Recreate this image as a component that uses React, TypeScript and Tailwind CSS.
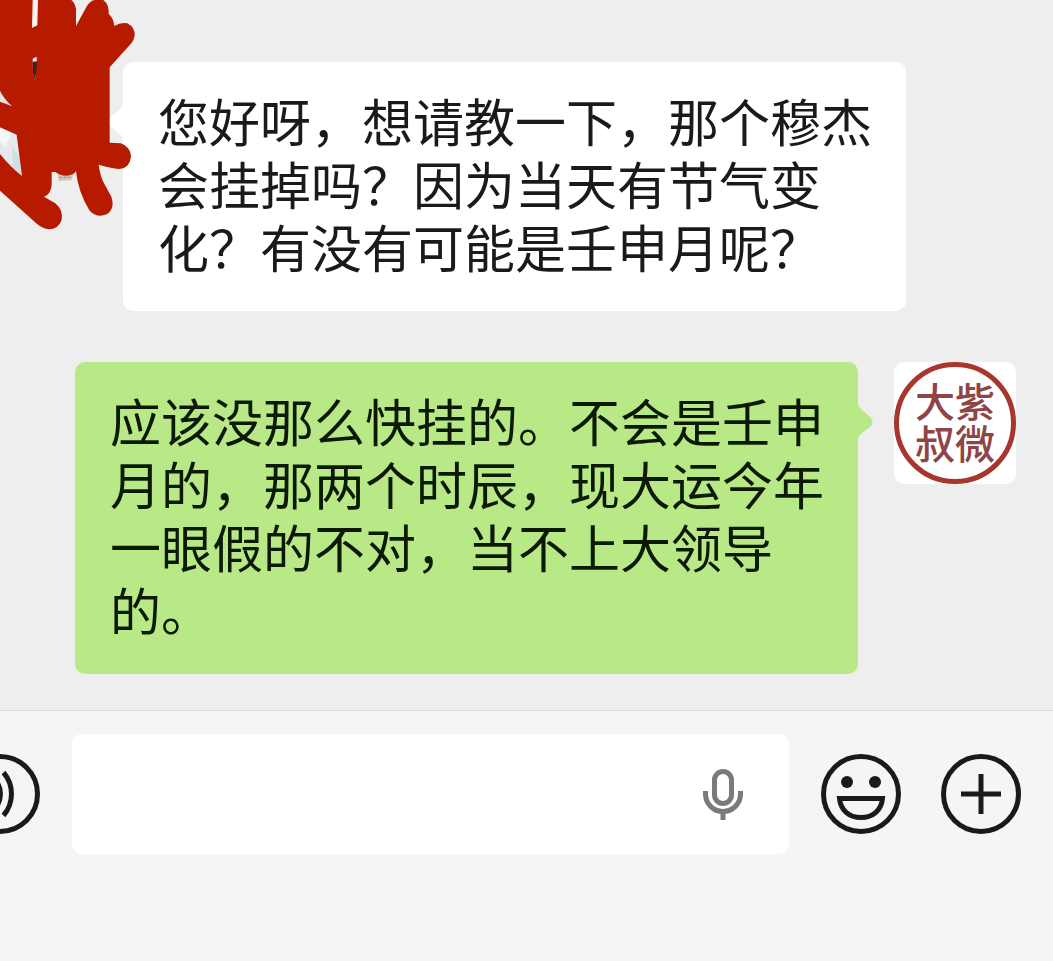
import type { ReactNode } from 'react'

interface Message {
  id: number
  mine: boolean
  text: string
}

const messages: Message[] = [
  {
    id: 1,
    mine: false,
    text: '您好呀，想请教一下，那个穆杰会挂掉吗？因为当天有节气变化？有没有可能是壬申月呢？',
  },
  {
    id: 2,
    mine: true,
    text: '应该没那么快挂的。不会是壬申月的，那两个时辰，现大运今年一眼假的不对，当不上大领导的。',
  },
]

// Contact photo, scribbled over with a red marker
function HiddenAvatar() {
  return (
    <svg
      className="absolute left-0 top-0 z-10 h-[240px] w-[180px] pointer-events-none"
      viewBox="0 0 540 720"
      aria-hidden="true"
    >
      <path d="M92 0H118V100L110 175H92Z" fill="#f6f3f1" />
      <path d="M98 185L113 184L111 214L103 240L98 212Z" fill="#3b2222" />
      <path d="M0 268L45 325L0 310Z" fill="#e4e3df" />
      <path d="M0 375L60 400L72 535L0 470Z" fill="#e3e9ed" />
      <path d="M0 384L34 398L18 440L0 425Z" fill="#f4f6f7" />
      <path d="M36 440L58 470L66 528L40 505Z" fill="#d3dde3" />
      <path d="M172 518H222L214 541L176 543Z" fill="#d3c7ba" />
      <path d="M178 532H214" stroke="#a99381" strokeWidth="4" strokeDasharray="8 5" />
      <path
        fill="#b61b00"
        fillRule="evenodd"
        d="M0 0H98L96 84L112 76L114 0H214Q226 10 228 28V78L262 16Q272 2 284 0H310Q328 14 326 42Q341 54 343 78Q362 66 382 70Q405 82 404 106Q402 122 394 130L329 202V428L362 430Q392 440 393 470Q389 504 358 507Q345 507 296 494Q301 530 312 550L334 590Q346 626 320 643Q290 656 268 631Q234 575 228 514Q218 527 200 527Q180 527 166 516L155 516V556Q152 584 132 590L166 610Q190 630 185 660Q175 688 146 688Q130 686 112 673L0 572V462Q32 502 66 528L50 404L0 382V305L37 319Q14 300 0 272ZM98 176L110 170V210L104 240L99 214Z"
      />
    </svg>
  )
}

function SealAvatar() {
  return (
    <div className="h-[122px] w-[122px] shrink-0 overflow-hidden rounded-[10px] bg-white">
      <div className="flex h-full w-full items-center justify-center rounded-full border-[5px] border-[#a8352e] pb-1 text-[40px] font-medium leading-[42px] text-[#8f4546]">
        <p className="w-20">大紫叔微</p>
      </div>
    </div>
  )
}

function Bubble({ mine, children }: { mine: boolean; children: ReactNode }) {
  return (
    <div
      className={
        mine
          ? 'relative flex-1 rounded-[10px] bg-[#b8e986] pb-[33px] pl-[35px] pr-8 pt-[27px] text-[#0c1a05]'
          : 'relative flex-1 rounded-[10px] bg-white pb-[33px] pl-[35px] pr-8 pt-[27px] text-[#1a1a1a]'
      }
    >
      <svg
        className={
          mine
            ? 'absolute left-full top-[42px] h-9 w-4 text-[#b8e986]'
            : 'absolute right-full top-[42px] h-9 w-4 -scale-x-100 text-white'
        }
        viewBox="0 0 16 36"
        fill="currentColor"
        aria-hidden="true"
      >
        <path d="M0 0Q1 4 4 6L12 13Q17 18 12 23L4 29Q1 31 0 35Z" />
      </svg>
      <p className="text-[51px] leading-[63px]">{children}</p>
    </div>
  )
}

function InputBar() {
  return (
    <form
      className="flex flex-1 items-start border-t border-[#dcdcdc] bg-[#f5f5f5] pr-8 pt-[23px] text-[#1a1a1a]"
      onSubmit={(e) => e.preventDefault()}
    >
      <div className="flex flex-1 items-center">
        <button type="button" aria-label="语音" className="flex w-10 shrink-0 justify-end overflow-hidden">
          <svg className="h-20 w-20 shrink-0" viewBox="0 0 80 80" fill="none" stroke="currentColor" strokeWidth="5">
            <circle cx="40" cy="40" r="37.5" />
            <path d="M43.5 18.5A33 33 0 0 1 43.5 61.5" />
            <path d="M35 25.5A22 22 0 0 1 35 54.5" />
          </svg>
        </button>

        <div className="ml-8 flex h-[120px] min-w-0 flex-1 items-center rounded-[10px] bg-white">
          <input
            type="text"
            aria-label="消息"
            className="h-full min-w-0 flex-1 bg-transparent px-6 text-[51px] outline-none"
          />
          <button type="button" aria-label="语音输入" className="mr-10 text-[#7a7a7a]">
            <svg className="h-[52px] w-[52px]" viewBox="0 0 52 52" fill="none" stroke="currentColor" strokeWidth="5">
              <rect x="17.5" y="3.5" width="17" height="32" rx="8.5" />
              <path d="M8.5 23V26a17.5 17.5 0 0 0 35 0V23" />
              <path d="M26 43V53" />
            </svg>
          </button>
        </div>

        <button type="button" aria-label="表情" className="ml-8">
          <svg className="h-20 w-20" viewBox="0 0 80 80" fill="none" stroke="currentColor" strokeWidth="5">
            <circle cx="40" cy="40" r="37.5" />
            <circle cx="26" cy="28" r="6" fill="currentColor" stroke="none" />
            <circle cx="54" cy="28" r="6" fill="currentColor" stroke="none" />
            <path d="M18.5 44.5H61.5C60.5 56 52 63.5 40 63.5S19.5 56 18.5 44.5Z" />
          </svg>
        </button>

        <button type="button" aria-label="更多" className="ml-10">
          <svg className="h-20 w-20" viewBox="0 0 80 80" fill="none" stroke="currentColor" strokeWidth="5">
            <circle cx="40" cy="40" r="37.5" />
            <path d="M40 20V60M20 40H60" />
          </svg>
        </button>
      </div>
    </form>
  )
}

export default function App() {
  return (
    <div
      lang="zh-CN"
      className="relative flex min-h-screen flex-col bg-[#eeeeee] font-['Noto_Sans_CJK_SC',sans-serif]"
    >
      <HiddenAvatar />
      <main className="flex flex-col gap-[51px] pb-9 pt-[62px]">
        {messages.map((m) =>
          m.mine ? (
            <div key={m.id} className="flex items-start gap-9 pl-[75px] pr-[37px]">
              <Bubble mine>{m.text}</Bubble>
              <SealAvatar />
            </div>
          ) : (
            <div key={m.id} className="flex items-start pl-[123px] pr-[147px]">
              <Bubble mine={false}>{m.text}</Bubble>
            </div>
          )
        )}
      </main>
      <InputBar />
    </div>
  )
}
